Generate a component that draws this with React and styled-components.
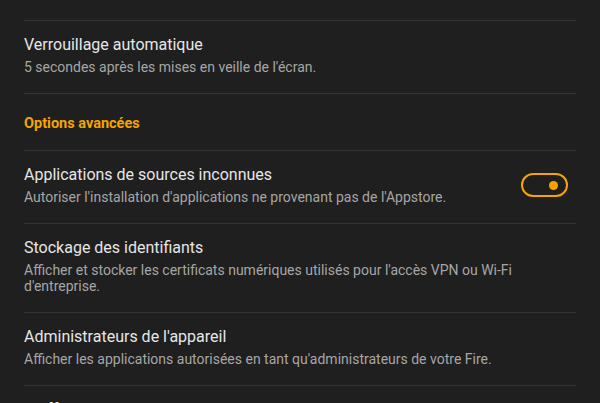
import React from "react";
import styled, { createGlobalStyle } from "styled-components";

const GlobalStyle = createGlobalStyle`
  html, body {
    margin: 0;
    padding: 0;
    background: #1f1f1f;
  }
  body {
    font-family: Roboto, "Liberation Sans", sans-serif;
    -webkit-font-smoothing: antialiased;
  }
`;

const items = [
  {
    type: "row",
    title: "Verrouillage automatique",
    subtitle: "5 secondes après les mises en veille de l'écran.",
  },
  { type: "header", title: "Options avancées" },
  {
    type: "row",
    title: "Applications de sources inconnues",
    subtitle: "Autoriser l'installation d'applications ne provenant pas de l'Appstore.",
    toggle: true,
  },
  {
    type: "row",
    title: "Stockage des identifiants",
    subtitle:
      "Afficher et stocker les certificats numériques utilisés pour l'accès VPN ou Wi-Fi d'entreprise.",
  },
  {
    type: "row",
    title: "Administrateurs de l'appareil",
    subtitle: "Afficher les applications autorisées en tant qu'administrateurs de votre Fire.",
  },
  { type: "row", title: "Chiffrement", subtitle: "Chiffrer l'appareil" },
];

export default function App() {
  return (
    <>
      <GlobalStyle />
      <Screen>
        <List>
          {items.map((item) =>
            item.type === "header" ? (
              <SectionHeader key={item.title}>{item.title}</SectionHeader>
            ) : (
              <Row key={item.title}>
                <TextBlock>
                  <Title>{item.title}</Title>
                  <Subtitle>{item.subtitle}</Subtitle>
                </TextBlock>
                {item.toggle && (
                  <Toggle>
                    <Knob />
                  </Toggle>
                )}
              </Row>
            )
          )}
        </List>
      </Screen>
    </>
  );
}

const Screen = styled.div`
  width: 600px;
  height: 403px;
  overflow: hidden;
  background: #1f1f1f;
  padding: 20px 24px 0 24px;
  box-sizing: border-box;
`;

const List = styled.div`
  display: flex;
  flex-direction: column;
`;

const Row = styled.div`
  display: flex;
  flex-direction: row;
  align-items: center;
  justify-content: space-between;
  border-top: 1px solid #343434;
  padding: 14px 0 18px 0;
  gap: 24px;
`;

const TextBlock = styled.div`
  display: flex;
  flex-direction: column;
  gap: 4px;
  flex: 1;
  min-width: 0;
`;

const Title = styled.div`
  font-size: 16px;
  line-height: 20px;
  color: #e6e6e6;
`;

const Subtitle = styled.div`
  font-size: 14px;
  line-height: 16px;
  color: #a6a6a6;
  padding-right: 20px;
`;

const SectionHeader = styled.div`
  border-top: 1px solid #343434;
  padding: 21px 0 17px 0;
  font-size: 14.5px;
  line-height: 18px;
  font-weight: 700;
  color: #f5a400;
`;

const Toggle = styled.div`
  width: 35px;
  height: 20px;
  border: 2px solid #f5a400;
  border-radius: 12px;
  display: flex;
  align-items: center;
  justify-content: flex-end;
  padding-right: 8px;
  margin-right: 8px;
  flex-shrink: 0;
`;

const Knob = styled.div`
  width: 9px;
  height: 9px;
  border-radius: 50%;
  background: #f5a400;
`;
